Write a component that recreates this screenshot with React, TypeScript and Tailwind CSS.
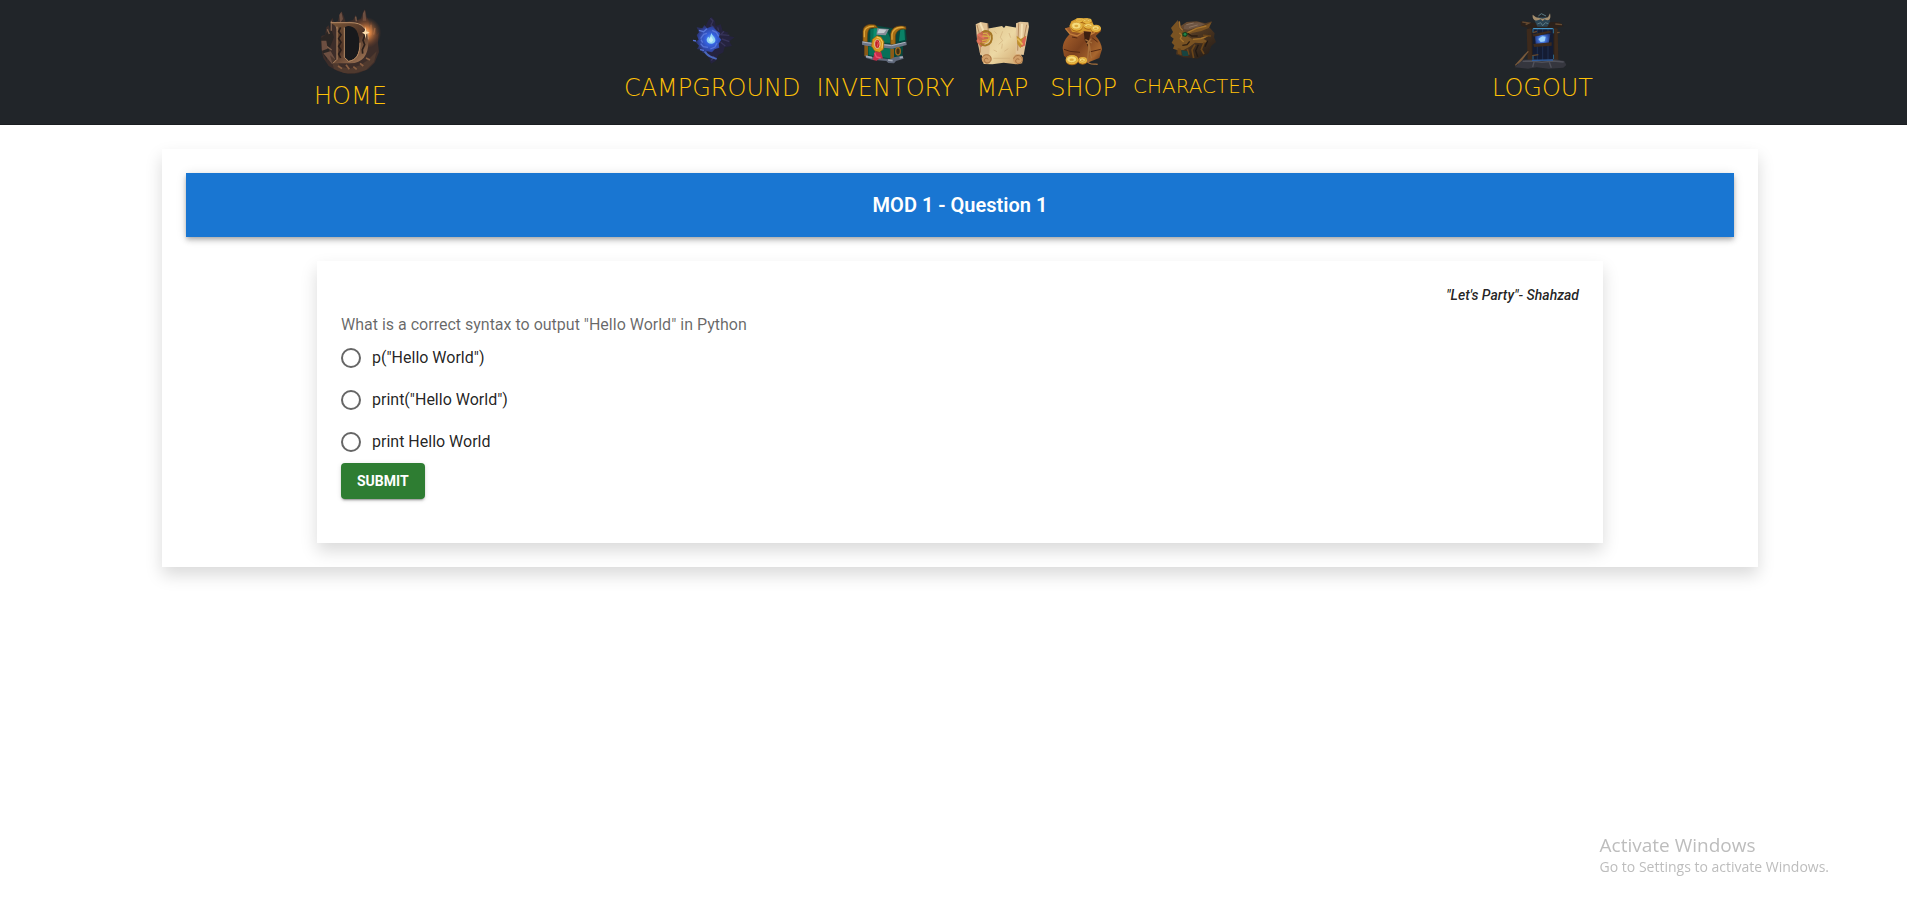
import React, { useState } from "react";

function HomeIcon() {
  return (
    <svg viewBox="60 24 192 216" className="h-[72px] w-16" aria-hidden="true">
      <defs>
        <radialGradient id="homeGlow" cx="203" cy="98" r="48" gradientUnits="userSpaceOnUse">
          <stop offset="0" stopColor="#ffd9a0" />
          <stop offset=".25" stopColor="#e58a45" />
          <stop offset="1" stopColor="#6b3a26" stopOpacity="0" />
        </radialGradient>
        <linearGradient id="homeD" x1="105" y1="65" x2="200" y2="190" gradientUnits="userSpaceOnUse">
          <stop offset="0" stopColor="#7a5638" />
          <stop offset=".5" stopColor="#4e3326" />
          <stop offset="1" stopColor="#a57a59" />
        </linearGradient>
      </defs>
      <path d="M70 108L82 104L85 82L92 76L96 90L100 58L104 54L108 68L120 62L125 42L131 34L137 48L143 66L165 60L173 44L177 60L188 58L196 34L201 28L206 50L212 62L214 84L220 64L225 100L233 90L236 106L242 96L240 130L243 156L230 188L210 208L180 220L150 222L118 213L92 198L76 174L70 148Z" fill="#3d2d29" />
      <path d="M82 104l10-14 10 4 6 18-14 34-8 34-12-22-6-42z" fill="#2b2624" />
      <path d="M70 122h15l4 24-17 6zM76 160l22-6 14 24-10 14zM124 45l6-10 5 22-9 12zM195 40l6-10 4 32h-11z" fill="#6d4f41" />
      <path d="M88 88l6 14m6-40v30m12-18l6 12m55-36l2 14m44 10v30m12-20l-4 20m-140 36l14 10" stroke="#7d5d49" strokeWidth="4" />
      <circle cx="203" cy="98" r="46" fill="url(#homeGlow)" />
      <path d="M96 166l20 16 12 18 28 6 30-10 24-16 26-26-8 32-24 24-34 10-32-1-30-12z" fill="#4f392e" />
      <path d="M120 198l12 8m12-12l10 14m12-8l10 8m10-18l10 8m8-24l12 6" stroke="#8a5f42" strokeWidth="5" />
      <path fillRule="evenodd" d="M98 68H159C199 68 211 92 211 126C211 166 193 190 157 190H105L117 179V81ZM139 82V172L151 183C174 179 184 164 184 127C184 94 171 80 151 78Z" fill="url(#homeD)" />
      <path d="M139 82l12-4c20 2 33 16 33 49 0 37-10 52-33 56l-12-11z" fill="#18191c" />
      <path d="M98 68h61c34 0 50 18 52 50M117 80v98l-12 12M139 82v90l13 12c22-4 34-19 34-56" fill="none" stroke="#b98d66" strokeWidth="3" />
      <path d="M128 82l-6 12 7 10-7 12 7 11-7 12 7 11-7 12 6 12M196 94l4 13-5 14 5 13-7 15 1 12" fill="none" stroke="#2a1e1a" strokeWidth="5" />
      <path d="M203 80l2 14 10 4-10 4-2 14-3-13-8-5 8-4z" fill="#ffe0b0" />
    </svg>
  );
}

function FlameIcon() {
  return (
    <svg viewBox="219 24 192 192" className="size-16" aria-hidden="true">
      <defs>
        <radialGradient id="flame" cx="312" cy="118" r="46" gradientUnits="userSpaceOnUse">
          <stop offset="0" stopColor="#73b6ff" />
          <stop offset=".35" stopColor="#3562e0" />
          <stop offset=".75" stopColor="#3046a5" />
          <stop offset="1" stopColor="#2b3166" />
        </radialGradient>
      </defs>
      <path d="M314 50l10 14 2 14 15-5 6 19 18 6-9 8 27 6-16 12 8 14-22 4-4 15-15 8-8 18-14 8-6-16-18-22-16-30 4-34 20-12 8-16z" fill="#25233f" />
      <path d="M310 55l8 8-6 12 10 8m10-1l3 10m16 2l-10 10 26 2m-22 11l22 8m-26 2l14 11m-34 30l-8 14" fill="none" stroke="#37345a" strokeWidth="4" />
      <path d="M269 82l17 3 6-10 8 10 16-7 13 14 10 7-3 12 7 8-8 12 2 12-14 5-8 9-15-3-12 5-6-10-12-2 6-10-11-12 10-6-6-14 7-8z" fill="url(#flame)" />
      <path d="M258 121l9 2M276 91l14 4 10-9m-19 30l9-13 10-3m-19 31l8 9 14 2m-24 7l12 2m24-60l13 6 7 12m-5 20l-6 12-14 6m-28-28l5 9" fill="none" stroke="#5674d8" strokeWidth="4" />
      <path d="M290 155c8 13 19 18 38 24l2-5c-14-4-27-9-33-20z" fill="#4a68bd" />
      <path d="M313 99c2 7 12 13 12 22 0 7-5 10-12 10s-14-4-14-11c0-5 3-8 6-10l3 5z" fill="#92d4f5" />
      <path d="M312 109l7 12-7 7-7-7z" fill="#c3edf8" />
    </svg>
  );
}

function ChestIcon() {
  return (
    <svg viewBox="734 24 192 192" className="size-16" aria-hidden="true">
      <path d="M776 78L790 74 868 88 876 80 892 84 895 120 885 134 882 172 852 181 776 172 770 130Z" fill="#07473d" />
      <path d="M786 88l24-3 28 12 14 32-66-2zM780 140l72 6v30l-71-11z" fill="#087058" />
      <path d="M796 84l14-2-7 26-8 12zM876 90l12-4 2 34-18 4z" fill="#0c9676" opacity=".75" />
      <path d="M764 126V92C766 76 781 70 801 75L808 83L788 84C778 87 777 99 777 126Z" fill="#a56c14" stroke="#6d430e" strokeWidth="2" />
      <path d="M768 112V94C771 82 780 78 797 79" fill="none" stroke="#dca53a" strokeWidth="4" />
      <path d="M847 134V102C850 82 867 74 892 80L893 88C875 84 862 93 861 110V133Z" fill="#a56c14" stroke="#6d430e" strokeWidth="2" />
      <path d="M851 119v-16c3-14 15-23 35-21" fill="none" stroke="#dca53a" strokeWidth="4" />
      <path d="M768 135h11v34h-11zM846 146h11v34h-11z" fill="#8a5a16" />
      <path d="M807 85l35 2-10 19-28-2z" fill="#868e99" />
      <path d="M812 87l22 2-7 10-20 1z" fill="#c4c9ce" />
      <path d="M761 124l18 2 73 8 42-9 1 10-43 11-75-8-16-4z" fill="#6d7686" />
      <path d="M763 126l18 3 68 8 42-10" fill="none" stroke="#adb3be" strokeWidth="3" />
      <path d="M771 165l16 5 46 6 15 1 9-5 25-5 4 9-23 7-6 7-17-1-6-6-43-4-18-5z" fill="#5f6879" />
      <path d="M773 169l18 4m48 7l14 2m21-9l10-2" stroke="#a2aab8" strokeWidth="5" />
      <ellipse cx="869" cy="154" rx="7" ry="11" fill="#3f2f12" stroke="#a06a1e" strokeWidth="4" />
      <path d="M801 151l17 4 6 21-10-2-9 8-11-2 2-13z" fill="#c62e4b" />
      <path d="M799 158l5 13 13 3" fill="none" stroke="#ed5370" strokeWidth="4" />
      <path d="M806 107l12 4 9 14-2 23-11 9-15-4-9-14 2-21z" fill="#d8981e" stroke="#8d5c14" strokeWidth="2" />
      <path d="M805 111l11 4 7 12-2 18" fill="none" stroke="#f7cc5e" strokeWidth="3" />
      <ellipse cx="807" cy="132" rx="8" ry="13" fill="#bd2028" stroke="#e0c79a" strokeWidth="3" />
      <path d="M804 122l6 6-3 12" fill="none" stroke="#f0635d" strokeWidth="3" />
    </svg>
  );
}

function MapIcon() {
  return (
    <svg viewBox="64 24 192 192" className="size-16" aria-hidden="true">
      <defs>
        <linearGradient id="paper" x1="100" y1="80" x2="220" y2="190" gradientUnits="userSpaceOnUse">
          <stop offset="0" stopColor="#dfc48c" />
          <stop offset=".5" stopColor="#ecd8a4" />
          <stop offset="1" stopColor="#cfa56d" />
        </linearGradient>
      </defs>
      <path d="M105 88L132 83 160 78 166 84 171 77 205 83 221 190 202 193 165 188 131 193 105 192 94 140Z" fill="url(#paper)" />
      <path d="M81 73l15-7 20 4 8 54-2 39-27 3-10-48z" fill="#dfc092" />
      <path d="M202 70l12-5 25 2 2 13-16 85-24-2z" fill="#e1c498" />
      <path d="M85 75l9 33 1 50m22-88l3 40m90-40l-3 82m27-78l-10 53" stroke="#b58a5e" strokeWidth="3" fill="none" />
      <path d="M94 69l9 20 2 50m115-68l-3 72" stroke="#f4e0b6" strokeWidth="6" fill="none" />
      <path d="M86 105l15-12 24 7-3 18-25 24-13-17z" fill="#c5694d" />
      <path d="M87 103l19 11m-20 5l12 14" stroke="#e0735d" strokeWidth="7" />
      <path d="M102 96c11-7 26 0 27 12 3 14-5 26-17 28-8 1-16-3-17-8" fill="none" stroke="#a47624" strokeWidth="6" />
      <path d="M103 101c13-4 18 5 18 14s-10 15-20 12m0-19l24 2m-25 12l23-4" fill="none" stroke="#d6aa44" strokeWidth="4" />
      <path d="M204 107l12 10 16-10-4 28-13 9-9-12z" fill="#bf8f2c" />
      <path d="M222 116l11-8-5 29-11 4z" fill="#dc6553" />
      <path d="M206 116l16 18" stroke="#e4ba57" strokeWidth="5" />
      <circle cx="114" cy="177" r="15" fill="#d2a06a" />
      <circle cx="208" cy="178" r="15" fill="#d2a06a" />
      <path d="M100 174c4-13 25-13 27 1 2 14-17 19-20 7-1-8 9-10 11-4M195 176c3-13 25-13 26 2 0 14-19 17-20 5 0-7 9-9 11-3" fill="none" stroke="#a87342" strokeWidth="3" />
      <path d="M137 94l7 7m18-7l-7 18 7 10-12 11m31-34l5 14m-25 18l-2 15m-24 4l10 5m22-1l12-8M134 175h50" fill="none" stroke="#d2b07d" strokeWidth="2" />
    </svg>
  );
}

function Coin({ x, y, rx = 14, ry = 12 }: { x: number; y: number; rx?: number; ry?: number }) {
  return (
    <g>
      <ellipse cx={x} cy={y + 3} rx={rx} ry={ry} fill="#a76316" />
      <ellipse cx={x} cy={y} rx={rx} ry={ry} fill="#e8b840" />
      <ellipse cx={x - 1} cy={y - 1} rx={rx - 4} ry={ry - 4} fill="#f5dc7c" stroke="#cf9630" strokeWidth="2" />
      <ellipse cx={x - 1} cy={y} rx={rx / 3} ry={ry / 4} fill="#dba93d" />
    </g>
  );
}

function BagIcon() {
  return (
    <svg viewBox="306 24 192 192" className="size-16" aria-hidden="true">
      <defs>
        <linearGradient id="bag" x1="340" y1="100" x2="450" y2="190" gradientUnits="userSpaceOnUse">
          <stop offset="0" stopColor="#a8612c" />
          <stop offset=".45" stopColor="#7d421e" />
          <stop offset=".8" stopColor="#a8662e" />
          <stop offset="1" stopColor="#673215" />
        </linearGradient>
      </defs>
      <path d="M346 85l24-8 56 5 28 10-17 16c11 12 18 25 19 40l-8 26-36 14-51-1-19-20-4-22c1-20 11-33 22-43z" fill="url(#bag)" />
      <path d="M358 78l6-14 18-9 30 0 14 8 6 15 8 12-22 10-30-2-22-3z" fill="#d39a2f" />
      <Coin x={389} y={60} rx={12} ry={6} />
      <Coin x={411} y={62} rx={14} ry={7} />
      <Coin x={416} y={77} rx={15} ry={9} />
      <Coin x={438} y={85} rx={15} ry={11} />
      <Coin x={380} y={78} rx={18} ry={14} />
      <path d="M346 85l14 17 21 6 22-14 22 3-2 6 12-6" fill="none" stroke="#c27d3b" strokeWidth="4" />
      <path d="M401 94l22 2-6 24-3 20-10-20z" fill="#3d2011" />
      <path d="M382 114l-16-3m61 3l16 12m-101 22l18 6 30 3m28-1l34-8" fill="none" stroke="#552912" strokeWidth="3" />
      <path d="M406 119l20 10m-2-13l-14 16m6-2c2 22-4 39-3 53 2 14 22 8 30 10m-27-65c8 20 1 34 9 46" fill="none" stroke="#a8713c" strokeWidth="4" />
      <Coin x={398} y={181} rx={13} ry={10} />
      <Coin x={366} y={179} rx={19} ry={14} />
    </svg>
  );
}

function DragonIcon() {
  return (
    <svg viewBox="639 24 192 192" className="size-16" aria-hidden="true">
      <defs>
        <linearGradient id="helm" x1="700" y1="66" x2="770" y2="170" gradientUnits="userSpaceOnUse">
          <stop offset="0" stopColor="#6b4d33" />
          <stop offset=".5" stopColor="#4a341f" />
          <stop offset="1" stopColor="#2a2019" />
        </linearGradient>
      </defs>
      <path d="M686 60l9 18 18-12 30-2 26 6 20-6-8 18 16 18-2 12 6 14-14 12-8 22-34 16-40-4-24-9 4-26 2-18-6-12 4-18z" fill="url(#helm)" />
      <path d="M706 76l18-8 26-1 18 6-20 8-30 8-14-2z" fill="#6e5644" />
      <path d="M712 74l22-5m-14 13l26-7" stroke="#8d7460" strokeWidth="3" />
      <path d="M686 61l3 20 8 12 18 3 26-12 30-9 17-9-9 18-22 9-28 6-16 8 16 9 26-3 24-8-15 12 14 8-16 5-24-2-16 12-18 10-18 1-14-5 4-10-8-8 6-12-10-8 8-12-6-12z" fill="#7a5322" />
      <path d="M691 64l2 18 8 9m-10 8l8 7-5 10 10 10m12-28l26-13 30-7M732 118l24-2 20-8" fill="none" stroke="#a5732c" strokeWidth="4" />
      <path d="M738 134l-9 16 5 24M766 126l-9 22 8 14m-50-16l5 18m42-58l24 2" fill="none" stroke="#6a4519" strokeWidth="5" />
      <path d="M748 134l-8 18 6 18M776 122l-8 18" fill="none" stroke="#211a15" strokeWidth="4" />
      <path d="M716 100l12 8 18 0m-46 28l14-2 8-10" fill="none" stroke="#2c1e12" strokeWidth="4" />
      <path d="M700 98l10-3 8 7-7 9-11-2z" fill="#14401f" />
      <circle cx="708" cy="103" r="4" fill="#208647" />
      <path d="M686 144l10 2 2 20-12-5z" fill="#6a4519" />
      <path d="M697 151l18 3 4 14-18 0z" fill="#174441" />
    </svg>
  );
}

function GateIcon() {
  return (
    <svg viewBox="122 24 192 192" className="size-16" aria-hidden="true">
      <defs>
        <radialGradient id="gate" cx="219" cy="117" r="25" gradientUnits="userSpaceOnUse">
          <stop offset="0" stopColor="#a7ddff" />
          <stop offset=".4" stopColor="#4577dd" />
          <stop offset="1" stopColor="#1f3275" />
        </radialGradient>
      </defs>
      <path d="M154 64l36 4 80-2 13 12-19 5 3 102h-90l-2-102-20-6z" fill="#2b211b" />
      <path d="M190 84h62v98h-62z" fill="#141c33" />
      <path d="M204 84v98m16-98v98m16-98v98" fill="none" stroke="#1e2f50" strokeWidth="3" />
      <path d="M191 98v-12h61v14m-61 66v14m62-16v14" fill="none" stroke="#2f6f94" strokeWidth="3" />
      <path d="M192 86h58" stroke="#4d9ed0" strokeWidth="3" />
      <path d="M197 108l46-7-5 30-39 1z" fill="url(#gate)" />
      <path d="M207 117l12-8 10 1-3 14-12 2z" fill="#9ed3fb" />
      <path d="M190 103l50-11 7 5-54 13zM192 132l55-5v10l-53 4zM172 88l14-3 2 94h-13zM255 84l10 2 2 94-12 2z" fill="#3d2a1c" />
      <path d="M159 66l20 3-10 5m89-2l20 2m-15 24l8-1m-80 1l12-4m-14 73l18-3" stroke="#65492f" strokeWidth="4" fill="none" />
      <path d="M196 62l10-10h28l9 11-9 17h-30z" fill="#2b4454" />
      <path d="M190 44c-2 17 10 21 24 14l6 5 6-5c13 7 20 0 16-18l-6 12-16 4-20-4z" fill="#a58e6d" />
      <path d="M207 48l9-7 14 7m-26 24l10-4 6 9 8-9 9 3" stroke="#5b7a83" strokeWidth="3" fill="none" />
      <path d="M138 196l39-42m-30 38l24-31" stroke="#7a5a3a" strokeWidth="4" />
      <path d="M136 202l12-12 13-11 29-1 32 4 32-5 31 6 6 12-9 8-44 3-36-4-26 4z" fill="#35363e" />
      <path d="M160 184l28-1 30 4 34-4 31 3m-89 0l-4 15m50-14l6 16" fill="none" stroke="#50515a" strokeWidth="4" />
      <path d="M188 181l63-1" stroke="#2f5c9c" strokeWidth="4" />
    </svg>
  );
}

function NavItem({
  label,
  icon,
  small = false,
}: {
  label: string;
  icon: React.ReactNode;
  small?: boolean;
}) {
  return (
    <a href="#" className="flex flex-col items-center whitespace-nowrap text-[#ffc107]">
      {icon}
      <span
        className={
          small
            ? "font-['DejaVu_Sans',sans-serif] text-xl leading-7 font-extralight"
            : "font-['DejaVu_Sans',sans-serif] text-2xl leading-8 font-extralight"
        }
      >
        {label}
      </span>
    </a>
  );
}

const options = ['p("Hello World")', 'print("Hello World")', "print Hello World"];

export default function App() {
  const [answer, setAnswer] = useState("");

  return (
    <div className="min-h-screen bg-white font-['Roboto',sans-serif] text-black/87">
      <header className="border-b border-[#1a1d20] bg-[#212529] pt-2 pb-3">
        <nav className="flex items-start justify-between px-[314px]">
          <NavItem label="HOME" icon={<HomeIcon />} />
          <div className="flex items-start gap-4">
            <NavItem label="CAMPGROUND" icon={<FlameIcon />} />
            <NavItem label="INVENTORY" icon={<ChestIcon />} />
            <NavItem label="MAP" icon={<MapIcon />} />
            <NavItem label="SHOP" icon={<BagIcon />} />
            <NavItem label="CHARACTER" icon={<DragonIcon />} small />
          </div>
          <NavItem label="LOGOUT" icon={<GateIcon />} />
        </nav>
      </header>

      <main className="pt-6 pr-[149px] pl-[162px]">
        <section className="p-6 shadow-[0_8px_16px_rgba(0,0,0,0.15)]">
          <div className="flex h-16 items-center justify-center bg-[#1976d2] text-white shadow-[0_2px_4px_-1px_rgba(0,0,0,0.2),0_4px_5px_0_rgba(0,0,0,0.14),0_1px_10px_0_rgba(0,0,0,0.12)]">
            <h1 className="text-xl font-semibold">MOD 1 - Question 1</h1>
          </div>

          <form
            className="mx-[131px] mt-6 px-6 pt-6 pb-11 shadow-[0_8px_16px_rgba(0,0,0,0.15)]"
            onSubmit={(e) => e.preventDefault()}
          >
            <p className="text-right text-sm leading-5 font-medium italic">"Let's Party"- Shahzad</p>
            <fieldset>
              <legend className="pt-2 text-base leading-6 text-black/60">
                What is a correct syntax to output "Hello World" in Python
              </legend>
              {options.map((option) => (
                <label key={option} className="flex h-[42px] w-fit cursor-pointer items-center gap-[11px] text-base">
                  <input
                    type="radio"
                    name="answer"
                    value={option}
                    checked={answer === option}
                    onChange={() => setAnswer(option)}
                    className="size-5 appearance-none rounded-full border-2 border-[#666666] checked:border-[6px] checked:border-[#1976d2]"
                  />
                  {option}
                </label>
              ))}
            </fieldset>
            <button
              type="submit"
              className="block h-9 rounded bg-[#2e7d32] px-4 text-sm font-bold text-white shadow-[0_3px_1px_-2px_rgba(0,0,0,0.2),0_2px_2px_0_rgba(0,0,0,0.14),0_1px_5px_0_rgba(0,0,0,0.12)]"
            >
              SUBMIT
            </button>
          </form>
        </section>
      </main>

      <aside className="pointer-events-none fixed right-[78px] bottom-5 font-['Open_Sans',sans-serif] text-[#bdbdbd]">
        <p className="text-[19px] leading-6">Activate Windows</p>
        <p className="text-sm leading-5">Go to Settings to activate Windows.</p>
      </aside>
    </div>
  );
}
